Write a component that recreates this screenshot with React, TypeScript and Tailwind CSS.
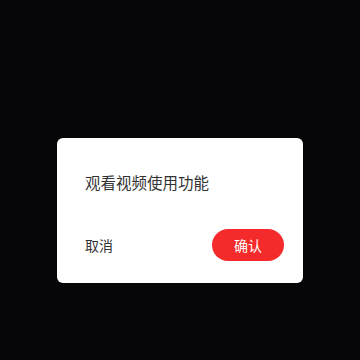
import React from 'react';

const font = { fontFamily: '"Noto Sans CJK SC", "Noto Sans", sans-serif' };

export default function App() {
  return (
    <div className="w-[360px] h-[360px] bg-[#060609] pt-[138px] flex justify-center" style={font}>
      <div className="w-[246px] h-[145px] bg-white rounded-[6px] flex flex-col pl-[28px] pr-[19px]">
        <div className="pt-[33px] text-[15.5px] leading-[22px] text-[#333333]">观看视频使用功能</div>
        <div className="mt-auto mb-[22px] flex items-center justify-between">
          <span className="text-[14px] text-[#333333]">取消</span>
          <button className="w-[72px] h-[32px] rounded-full bg-[#f52a2a] text-white text-[14px]">确认</button>
        </div>
      </div>
    </div>
  );
}
